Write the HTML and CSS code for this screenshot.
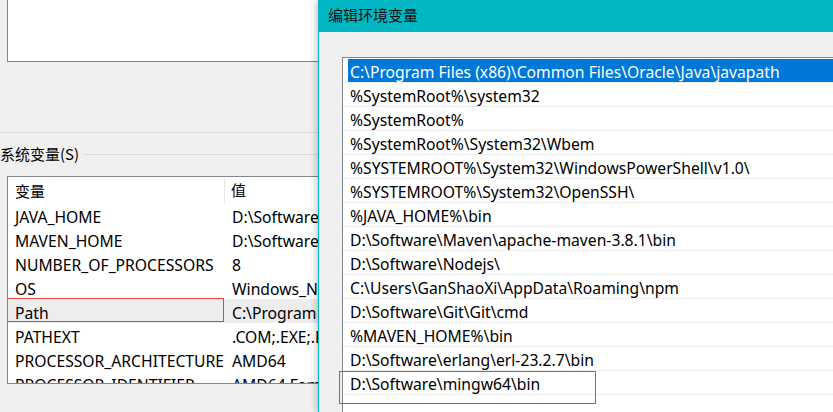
FILE: index.html
```html
<!DOCTYPE html>
<html lang="zh-CN">
<head>
<meta charset="utf-8">
<title>编辑环境变量</title>
<link rel="stylesheet" href="styles.css">
</head>
<body>
<div class="desktop">
  <div class="back-window">
    <div class="user-box"></div>
    <div class="separator"></div>
    <div class="group-title">
      <span class="group-label">系统变量(S)</span>
      <span class="group-line"></span>
    </div>
    <div class="var-table">
      <div class="thead">
        <div class="col-name">变量</div>
        <div class="col-value">值</div>
      </div>
      <div class="trow"><div class="col-name">JAVA_HOME</div><div class="col-value">D:\Software\Java</div></div>
      <div class="trow"><div class="col-name">MAVEN_HOME</div><div class="col-value">D:\Software\Maven</div></div>
      <div class="trow"><div class="col-name">NUMBER_OF_PROCESSORS</div><div class="col-value">8</div></div>
      <div class="trow"><div class="col-name">OS</div><div class="col-value">Windows_NT</div></div>
      <div class="trow is-active"><div class="col-name">Path</div><div class="col-value">C:\Program Files</div><span class="mark mark-row"></span></div>
      <div class="trow"><div class="col-name">PATHEXT</div><div class="col-value">.COM;.EXE;.BAT</div></div>
      <div class="trow"><div class="col-name">PROCESSOR_ARCHITECTURE</div><div class="col-value">AMD64</div></div>
      <div class="trow"><div class="col-name">PROCESSOR_IDENTIFIER</div><div class="col-value">AMD64 Family</div></div>
    </div>
  </div>

  <div class="dialog">
    <div class="titlebar">编辑环境变量</div>
    <div class="dialog-body">
      <div class="path-list">
        <div class="item selected"><span class="cell">C:\Program Files (x86)\Common Files\Oracle\Java\javapath</span></div>
        <div class="item"><span class="cell">%SystemRoot%\system32</span></div>
        <div class="item"><span class="cell">%SystemRoot%</span></div>
        <div class="item"><span class="cell">%SystemRoot%\System32\Wbem</span></div>
        <div class="item"><span class="cell">%SYSTEMROOT%\System32\WindowsPowerShell\v1.0\</span></div>
        <div class="item"><span class="cell">%SYSTEMROOT%\System32\OpenSSH\</span></div>
        <div class="item"><span class="cell">%JAVA_HOME%\bin</span></div>
        <div class="item"><span class="cell">D:\Software\Maven\apache-maven-3.8.1\bin</span></div>
        <div class="item"><span class="cell">D:\Software\Nodejs\</span></div>
        <div class="item"><span class="cell">C:\Users\GanShaoXi\AppData\Roaming\npm</span></div>
        <div class="item"><span class="cell">D:\Software\Git\Git\cmd</span></div>
        <div class="item"><span class="cell">%MAVEN_HOME%\bin</span></div>
        <div class="item"><span class="cell">D:\Software\erlang\erl-23.2.7\bin</span></div>
        <div class="item"><span class="cell">D:\Software\mingw64\bin</span></div>
      </div>
    </div>
    <span class="mark mark-list"></span>
  </div>
</div>
</body>
</html>
```

FILE: styles.css
```css
html, body {
  margin: 0;
  padding: 0;
}

body {
  width: 833px;
  height: 412px;
  overflow: hidden;
  background: #f0f0f0;
  font-family: "Noto Sans", "Noto Sans CJK SC", sans-serif;
  font-size: 15.7px;
  color: #000;
}

.desktop {
  position: relative;
  width: 833px;
  height: 412px;
  overflow: hidden;
}

.back-window {
  width: 318px;
  height: 412px;
  background: #f0f0f0;
  overflow: hidden;
}

.user-box {
  margin-left: 7px;
  width: 340px;
  height: 61px;
  background: #fff;
  border: 1px solid #828790;
  border-top: none;
}

.separator {
  margin-top: 70px;
  height: 1px;
  background: #dcdcdc;
}

.group-title {
  display: flex;
  align-items: center;
  margin-top: 11px;
  height: 20px;
}

.group-label {
  font-family: "Noto Sans CJK SC", sans-serif;
  font-size: 15px;
  line-height: 20px;
  white-space: nowrap;
  padding-right: 3px;
}

.group-line {
  flex: 1;
  height: 1px;
  background: #dcdcdc;
}

.var-table {
  margin-top: 12px;
  margin-left: 7px;
  width: 340px;
  height: 206px;
  border: 1px solid #828790;
  background: #fff;
  overflow: hidden;
}

.thead {
  display: flex;
  height: 26px;
  line-height: 26px;
}

.col-name {
  flex: 0 0 auto;
  box-sizing: border-box;
  width: 217px;
  padding-left: 7px;
  white-space: nowrap;
  overflow: hidden;
}

.col-value {
  flex: 1 1 auto;
  min-width: 0;
  padding-left: 6px;
  white-space: nowrap;
  overflow: hidden;
}

.thead .col-name {
  font-family: "Noto Sans CJK SC", sans-serif;
  font-size: 15px;
  border-right: 1px solid #e5e5e5;
  margin-top: 1px;
  line-height: 25px;
}

.thead .col-value {
  font-family: "Noto Sans CJK SC", sans-serif;
  font-size: 15px;
}

.trow {
  position: relative;
  display: flex;
  box-sizing: border-box;
  height: 24px;
  padding-top: 4px;
  line-height: 20px;
}

.trow .col-name {
  width: 218px;
}

.trow .col-value {
  padding-left: 6px;
}

.trow.is-active {
  background: #ededed;
}

.mark {
  position: absolute;
  border: 1px solid #e8413c;
  box-sizing: border-box;
  pointer-events: none;
}

.mark-row {
  left: -1px;
  top: -1px;
  width: 217px;
  height: 24px;
}

.dialog {
  position: absolute;
  left: 318px;
  top: 0;
  width: 515px;
  height: 412px;
  border-left: 1px solid #00b7c3;
  background: #f0f0f0;
  box-shadow: -2px 0 6px rgba(0, 0, 0, 0.22);
  overflow: hidden;
}

.titlebar {
  height: 32px;
  line-height: 29px;
  padding-left: 9px;
  background: #00b7c3;
  font-family: "Noto Sans CJK SC", sans-serif;
  font-size: 15px;
  color: #111;
}

.dialog-body {
  padding-top: 25px;
  padding-left: 23px;
}

.path-list {
  width: 560px;
  height: 400px;
  border: 1px solid #828790;
  border-right: none;
  background: #fff;
  padding-top: 1px;
}

.item {
  display: flex;
  height: 23px;
  border-bottom: 1px solid #ededed;
}

.cell {
  flex: 1;
  box-sizing: border-box;
  margin-left: 5px;
  padding: 3px 0 0 2px;
  line-height: 20px;
  white-space: nowrap;
}

.item.selected .cell {
  background: #0078d7;
  color: #fff;
}

.mark-list {
  left: 20px;
  top: 371px;
  width: 257px;
  height: 33px;
}
```
